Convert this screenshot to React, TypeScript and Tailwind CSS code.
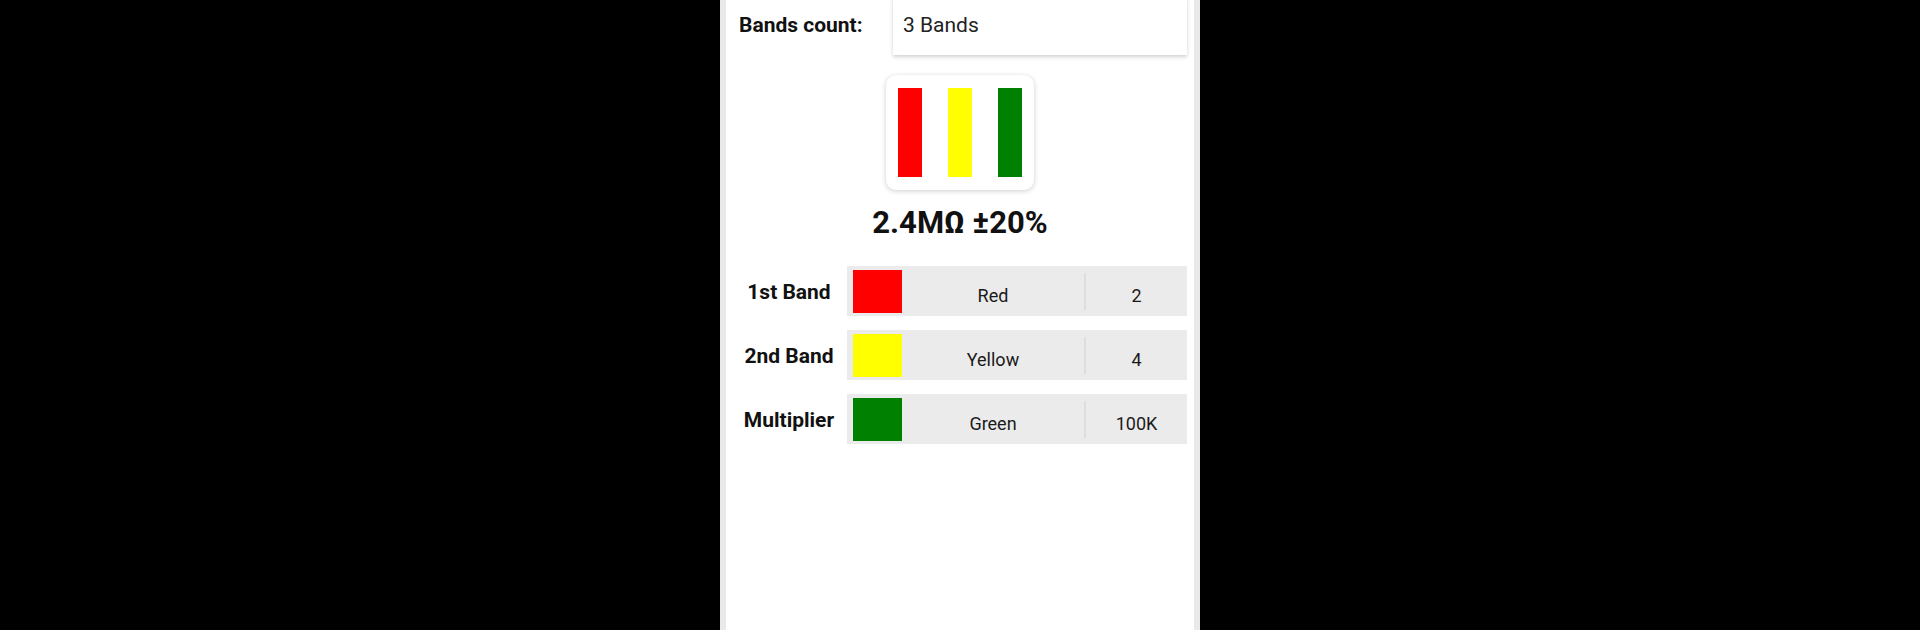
const bands = [
  { label: "1st Band", swatch: "bg-[#ff0000]", name: "Red", value: "2" },
  { label: "2nd Band", swatch: "bg-[#ffff00]", name: "Yellow", value: "4" },
  { label: "Multiplier", swatch: "bg-[#008000]", name: "Green", value: "100K" },
];

function BandRow({ label, swatch, name, value }: (typeof bands)[number]) {
  return (
    <div className="flex items-center">
      <div className="w-[121px] pl-[5px] pt-[3px] text-center text-[21px] font-bold text-[#111]">
        {label}
      </div>
      <div className="flex h-[50px] w-[340px] items-center bg-[#ebebeb] pl-[6px]">
        <div className={`h-[43px] w-[49px] ${swatch}`} />
        <div className="flex-1 pt-[8px] text-center text-[18px] text-[#1a1a1a]">{name}</div>
        <div className="h-[37px] w-[2px] bg-[#dedede]" />
        <div className="w-[101px] pt-[8px] text-center text-[18px] text-[#1a1a1a]">{value}</div>
      </div>
    </div>
  );
}

export default function App() {
  return (
    <div className="flex h-[630px] w-full justify-center overflow-hidden bg-black font-['Roboto',sans-serif]">
      <div className="flex w-[480px] bg-[#e9e9e9] px-[6px]">
        <div className="flex flex-1 flex-col bg-white">
          <div className="-mt-[4px] flex items-center pl-[13px]">
            <div className="w-[154px] pt-[1px] text-[21px] font-bold text-[#111]">Bands count:</div>
            <div className="flex h-[59px] w-[294px] items-center bg-white pl-[10px] pt-[1px] text-[21px] text-[#222] shadow-[0_2px_4px_rgba(0,0,0,0.18)]">
              3 Bands
            </div>
          </div>

          <div className="mt-[20px] flex justify-center">
            <div className="flex h-[115px] w-[148px] items-center justify-center gap-[26px] rounded-[10px] bg-white shadow-[0_1px_5px_rgba(0,0,0,0.2)]">
              <div className="h-[89px] w-[24px] bg-[#ff0000]" />
              <div className="h-[89px] w-[24px] bg-[#ffff00]" />
              <div className="h-[89px] w-[24px] bg-[#008000]" />
            </div>
          </div>

          <div className="mt-[18px] text-center text-[31px] font-bold leading-[30px] text-[#111]">
            2.4MΩ ±20%
          </div>

          <div className="mt-[28px] flex flex-col gap-[14px]">
            {bands.map((b) => (
              <BandRow key={b.label} {...b} />
            ))}
          </div>
        </div>
      </div>
    </div>
  );
}
